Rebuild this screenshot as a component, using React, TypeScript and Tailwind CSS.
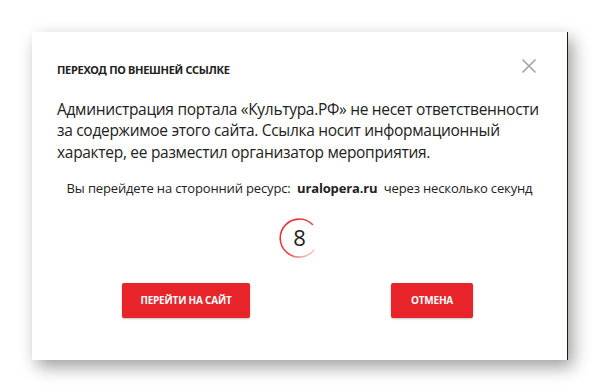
import React from 'react';

function CloseIcon() {
  return (
    <svg width="16" height="16" viewBox="0 0 16 16" fill="none" stroke="#a3a3a3" strokeWidth="1.6">
      <path d="M1.5 1.5 L14.5 14.5 M14.5 1.5 L1.5 14.5" />
    </svg>
  );
}

function CountdownRing({ value }: { value: number }) {
  // arc from ~1 o'clock, counterclockwise round to ~4 o'clock
  return (
    <div className="relative w-[44px] h-[44px] flex items-center justify-center">
      <svg className="absolute inset-0" width="44" height="44" viewBox="0 0 44 44" fill="none">
        <defs>
          <linearGradient id="ring" x1="0" y1="0" x2="1" y2="1">
            <stop offset="0%" stopColor="#e3262b" />
            <stop offset="55%" stopColor="#e9474b" />
            <stop offset="100%" stopColor="#fbe3e4" />
          </linearGradient>
        </defs>
        <path d="M34.5 9.5 A19 19 0 1 0 36 35" stroke="url(#ring)" strokeWidth="1.6" strokeLinecap="round" />
      </svg>
      <span className="text-[22px] leading-none text-[#222] font-['Open_Sans',sans-serif]">{value}</span>
    </div>
  );
}

export default function App() {
  return (
    <div className="w-[600px] h-[392px] bg-white overflow-hidden pt-[32px] pl-[32px] font-['Open_Sans',sans-serif]">
      <div className="w-[536px] h-[328px] bg-white border-r border-[#2a1712] shadow-[5px_7px_16px_rgba(0,0,0,0.38)] pl-[25px] pr-[25px] pt-[26px] flex flex-col">
        <div className="flex items-start justify-between">
          <h2 className="mt-[4px] text-[11px] font-bold tracking-[-0.3px] text-[#222] uppercase font-['Noto_Sans',sans-serif]">
            Переход по внешней ссылке
          </h2>
          <button className="mr-[5px] mt-[0px]">
            <CloseIcon />
          </button>
        </div>

        <p className="mt-[20px] w-[495px] text-[15.5px] leading-[21.5px] text-[#222] tracking-[-0.3px]">
          Администрация портала «Культура.РФ» не несет ответственности за содержимое этого сайта. Ссылка носит
          информационный характер, ее разместил организатор мероприятия.
        </p>

        <p className="mt-[16px] text-center text-[13px] text-[#222] tracking-[-0.15px]">
          Вы перейдете на сторонний ресурс:&nbsp; <span className="font-bold">uralopera.ru</span>&nbsp; через несколько секунд
        </p>

        <div className="mt-[16px] flex justify-center">
          <CountdownRing value={8} />
        </div>

        <div className="mt-[24px] flex">
          <button className="ml-[65px] w-[128px] h-[35px] rounded-[2px] bg-[#e8242a] text-white text-[10px] font-bold uppercase tracking-[-0.2px] shadow-[0_1px_2px_rgba(0,0,0,0.25)]">
            Перейти на сайт
          </button>
          <button className="ml-[141px] w-[82px] h-[35px] rounded-[2px] bg-[#e8242a] text-white text-[10px] font-bold uppercase tracking-[-0.2px] shadow-[0_1px_2px_rgba(0,0,0,0.25)]">
            Отмена
          </button>
        </div>
      </div>
    </div>
  );
}
